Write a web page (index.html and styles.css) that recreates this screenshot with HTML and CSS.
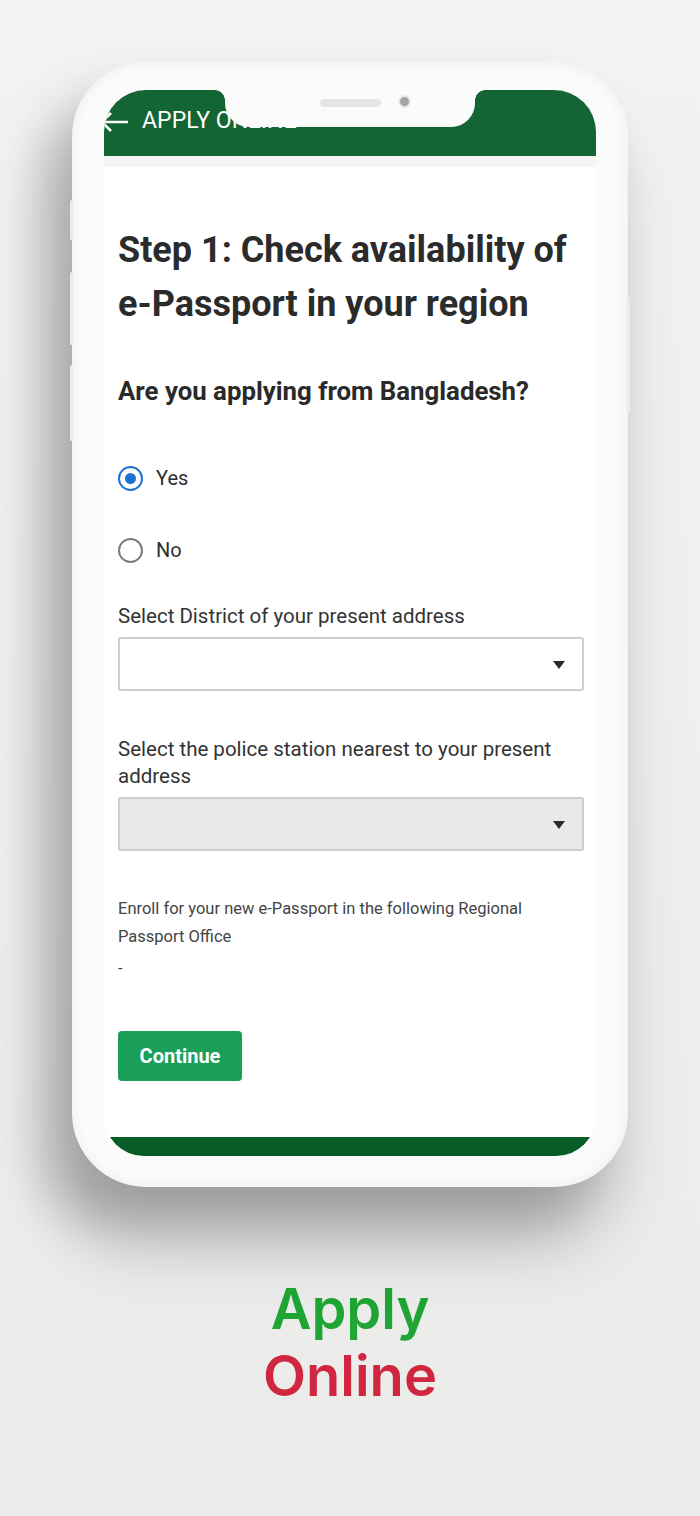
FILE: index.html
```html
<!DOCTYPE html>
<html lang="en">
<head>
<meta charset="utf-8">
<title>Apply Online</title>
<link rel="stylesheet" href="styles.css">
</head>
<body>
<div class="page">
  <div class="phone">
    <span class="side side-l1"></span>
    <span class="side side-l2"></span>
    <span class="side side-l3"></span>
    <span class="side side-r1"></span>
    <div class="screen">
      <header class="appbar">
        <svg class="back" viewBox="0 0 30 24" width="30" height="24" aria-hidden="true">
          <path d="M29 12H3.5M12 3L3 12L12 21" fill="none" stroke="#ffffff" stroke-width="2.6"/>
        </svg>
        <span class="appbar-title">APPLY ONLINE</span>
      </header>
      <div class="strip"></div>
      <main class="content">
        <h1 class="title">Step 1: Check availability of e-Passport in your region</h1>
        <h2 class="question">Are you applying from Bangladesh?</h2>
        <div class="radios">
          <label class="radio-row"><span class="radio radio-on"></span><span class="radio-text">Yes</span></label>
          <label class="radio-row"><span class="radio"></span><span class="radio-text">No</span></label>
        </div>
        <p class="field-label label-1">Select District of your present address</p>
        <div class="select"><span class="caret"></span></div>
        <p class="field-label label-2">Select the police station nearest to your present address</p>
        <div class="select select-disabled"><span class="caret"></span></div>
        <p class="note">Enroll for your new e-Passport in the following Regional Passport Office</p>
        <p class="note dash">-</p>
        <button class="continue" type="button">Continue</button>
      </main>
      <div class="bottom-bar"></div>
    </div>
    <div class="notch"><span class="speaker"></span><span class="camera"></span></div>
  </div>
  <div class="caption">
    <div class="cap-green">Apply</div>
    <div class="cap-red">Online</div>
  </div>
</div>
</body>
</html>
```

FILE: styles.css
```css
html, body {
  margin: 0;
  padding: 0;
}

body {
  width: 700px;
  height: 1516px;
  overflow: hidden;
  background: linear-gradient(180deg, #f2f2f2 0%, #efefef 50%, #ebebea 100%);
  font-family: Roboto, "Liberation Sans", Arial, sans-serif;
}

.page {
  display: flex;
  flex-direction: column;
  align-items: center;
  padding-top: 62px;
}

.phone {
  position: relative;
  width: 556px;
  height: 1125px;
  box-sizing: border-box;
  padding: 28px 32px 31px 32px;
  border-radius: 74px;
  background: #fbfbfb;
  box-shadow:
    inset 0 0 16px rgba(0, 0, 0, 0.06),
    -28px 38px 50px rgba(0, 0, 0, 0.23),
    -10px 64px 74px rgba(0, 0, 0, 0.14);
}

.side {
  position: absolute;
  width: 3px;
  background: #ececec;
  border-radius: 2px;
  box-shadow: 0 0 1px rgba(0, 0, 0, 0.12);
}
.side-l1 { left: -2px; top: 138px; height: 40px; }
.side-l2 { left: -2px; top: 210px; height: 73px; }
.side-l3 { left: -2px; top: 303px; height: 76px; }
.side-r1 { right: -2px; top: 234px; height: 117px; }

.screen {
  width: 492px;
  height: 1066px;
  border-radius: 42px 42px 40px 40px;
  overflow: hidden;
  background: #ffffff;
  display: flex;
  flex-direction: column;
}

.appbar {
  height: 66px;
  flex: none;
  box-sizing: border-box;
  background: #136533;
  display: flex;
  align-items: flex-start;
  padding-top: 17px;
  color: #ffffff;
}

.back {
  flex: none;
  margin-left: -5px;
  margin-top: 3px;
}

.appbar-title {
  margin-left: 13px;
  font-size: 23px;
  line-height: 28px;
  letter-spacing: 0.1px;
}

.strip {
  height: 11px;
  flex: none;
  background: #f4f4f4;
}

.content {
  flex: 1;
  display: flex;
  flex-direction: column;
  align-items: flex-start;
  padding: 0 12px 0 14px;
  color: #2c2c2c;
}

.title {
  margin: 56px 0 0 0;
  font-size: 36px;
  line-height: 54px;
  font-weight: 700;
  color: #2b2b2b;
}

.question {
  margin: 44px 0 0 0;
  font-size: 25.8px;
  line-height: 32px;
  font-weight: 700;
  color: #2a2a2a;
}

.radios {
  margin-top: 56px;
  display: flex;
  flex-direction: column;
  gap: 42px;
}

.radio-row {
  display: flex;
  align-items: center;
  height: 30px;
}

.radio {
  width: 25px;
  height: 25px;
  box-sizing: border-box;
  border: 2px solid #7a7a7a;
  border-radius: 50%;
  display: flex;
  align-items: center;
  justify-content: center;
}

.radio-on {
  border: 2.5px solid #1d72d1;
}
.radio-on::after {
  content: "";
  width: 11px;
  height: 11px;
  border-radius: 50%;
  background: #1d72d1;
}

.radio-text {
  margin-left: 13px;
  font-size: 20px;
  line-height: 30px;
  color: #2e2e2e;
}

.field-label {
  margin: 0;
  font-size: 20.5px;
  line-height: 27px;
  color: #333333;
}
.label-1 { margin-top: 38px; }
.label-2 { margin-top: 45px; }

.select {
  margin-top: 7px;
  width: 466px;
  height: 54px;
  box-sizing: border-box;
  border: 2px solid #cdcdcd;
  border-radius: 3px;
  background: #ffffff;
  display: flex;
  align-items: center;
  justify-content: flex-end;
  padding-right: 17px;
}

.select-disabled {
  background: #e9e9e9;
}

.caret {
  width: 0;
  height: 0;
  border-left: 6.5px solid transparent;
  border-right: 6.5px solid transparent;
  border-top: 8px solid #2a2a2a;
  margin-top: 2px;
}

.note {
  margin: 44px 0 0 0;
  font-size: 16.5px;
  line-height: 28px;
  color: #444444;
}

.dash {
  margin-top: 4px;
}

.continue {
  margin-top: 48px;
  width: 124px;
  height: 50px;
  border: none;
  border-radius: 4px;
  background: #199f5a;
  color: #ffffff;
  font-family: Roboto, "Liberation Sans", Arial, sans-serif;
  font-size: 20px;
  font-weight: 700;
  padding: 0;
}

.bottom-bar {
  flex: none;
  height: 19px;
  background: #065b26;
  margin-top: auto;
}

.notch {
  position: absolute;
  top: 27px;
  left: 153px;
  width: 250px;
  height: 38px;
  background: #fbfbfb;
  border-radius: 0 0 24px 24px;
  display: flex;
  align-items: flex-start;
  box-sizing: border-box;
  padding-left: 95px;
  padding-top: 10px;
}

.notch::before,
.notch::after {
  content: "";
  position: absolute;
  top: 1px;
  width: 10px;
  height: 10px;
}
.notch::before {
  left: -10px;
  background: radial-gradient(circle at 0 100%, transparent 9.5px, #fbfbfb 10px);
}
.notch::after {
  right: -10px;
  background: radial-gradient(circle at 100% 100%, transparent 9.5px, #fbfbfb 10px);
}

.speaker {
  width: 61px;
  height: 8px;
  border-radius: 4px;
  background: #e6e6e6;
}

.camera {
  margin-left: 17px;
  margin-top: -4px;
  width: 13px;
  height: 13px;
  box-sizing: border-box;
  border-radius: 50%;
  border: 2.5px solid #e8e8e8;
  background: #a3a3a3;
}

.caption {
  margin-top: 89px;
  display: flex;
  flex-direction: column;
  align-items: center;
  font-family: Inter, "Open Sans", sans-serif;
  font-weight: 600;
  font-size: 56px;
  line-height: 67px;
}

.cap-green { color: #1fa634; }
.cap-red { color: #d1263f; }
```
